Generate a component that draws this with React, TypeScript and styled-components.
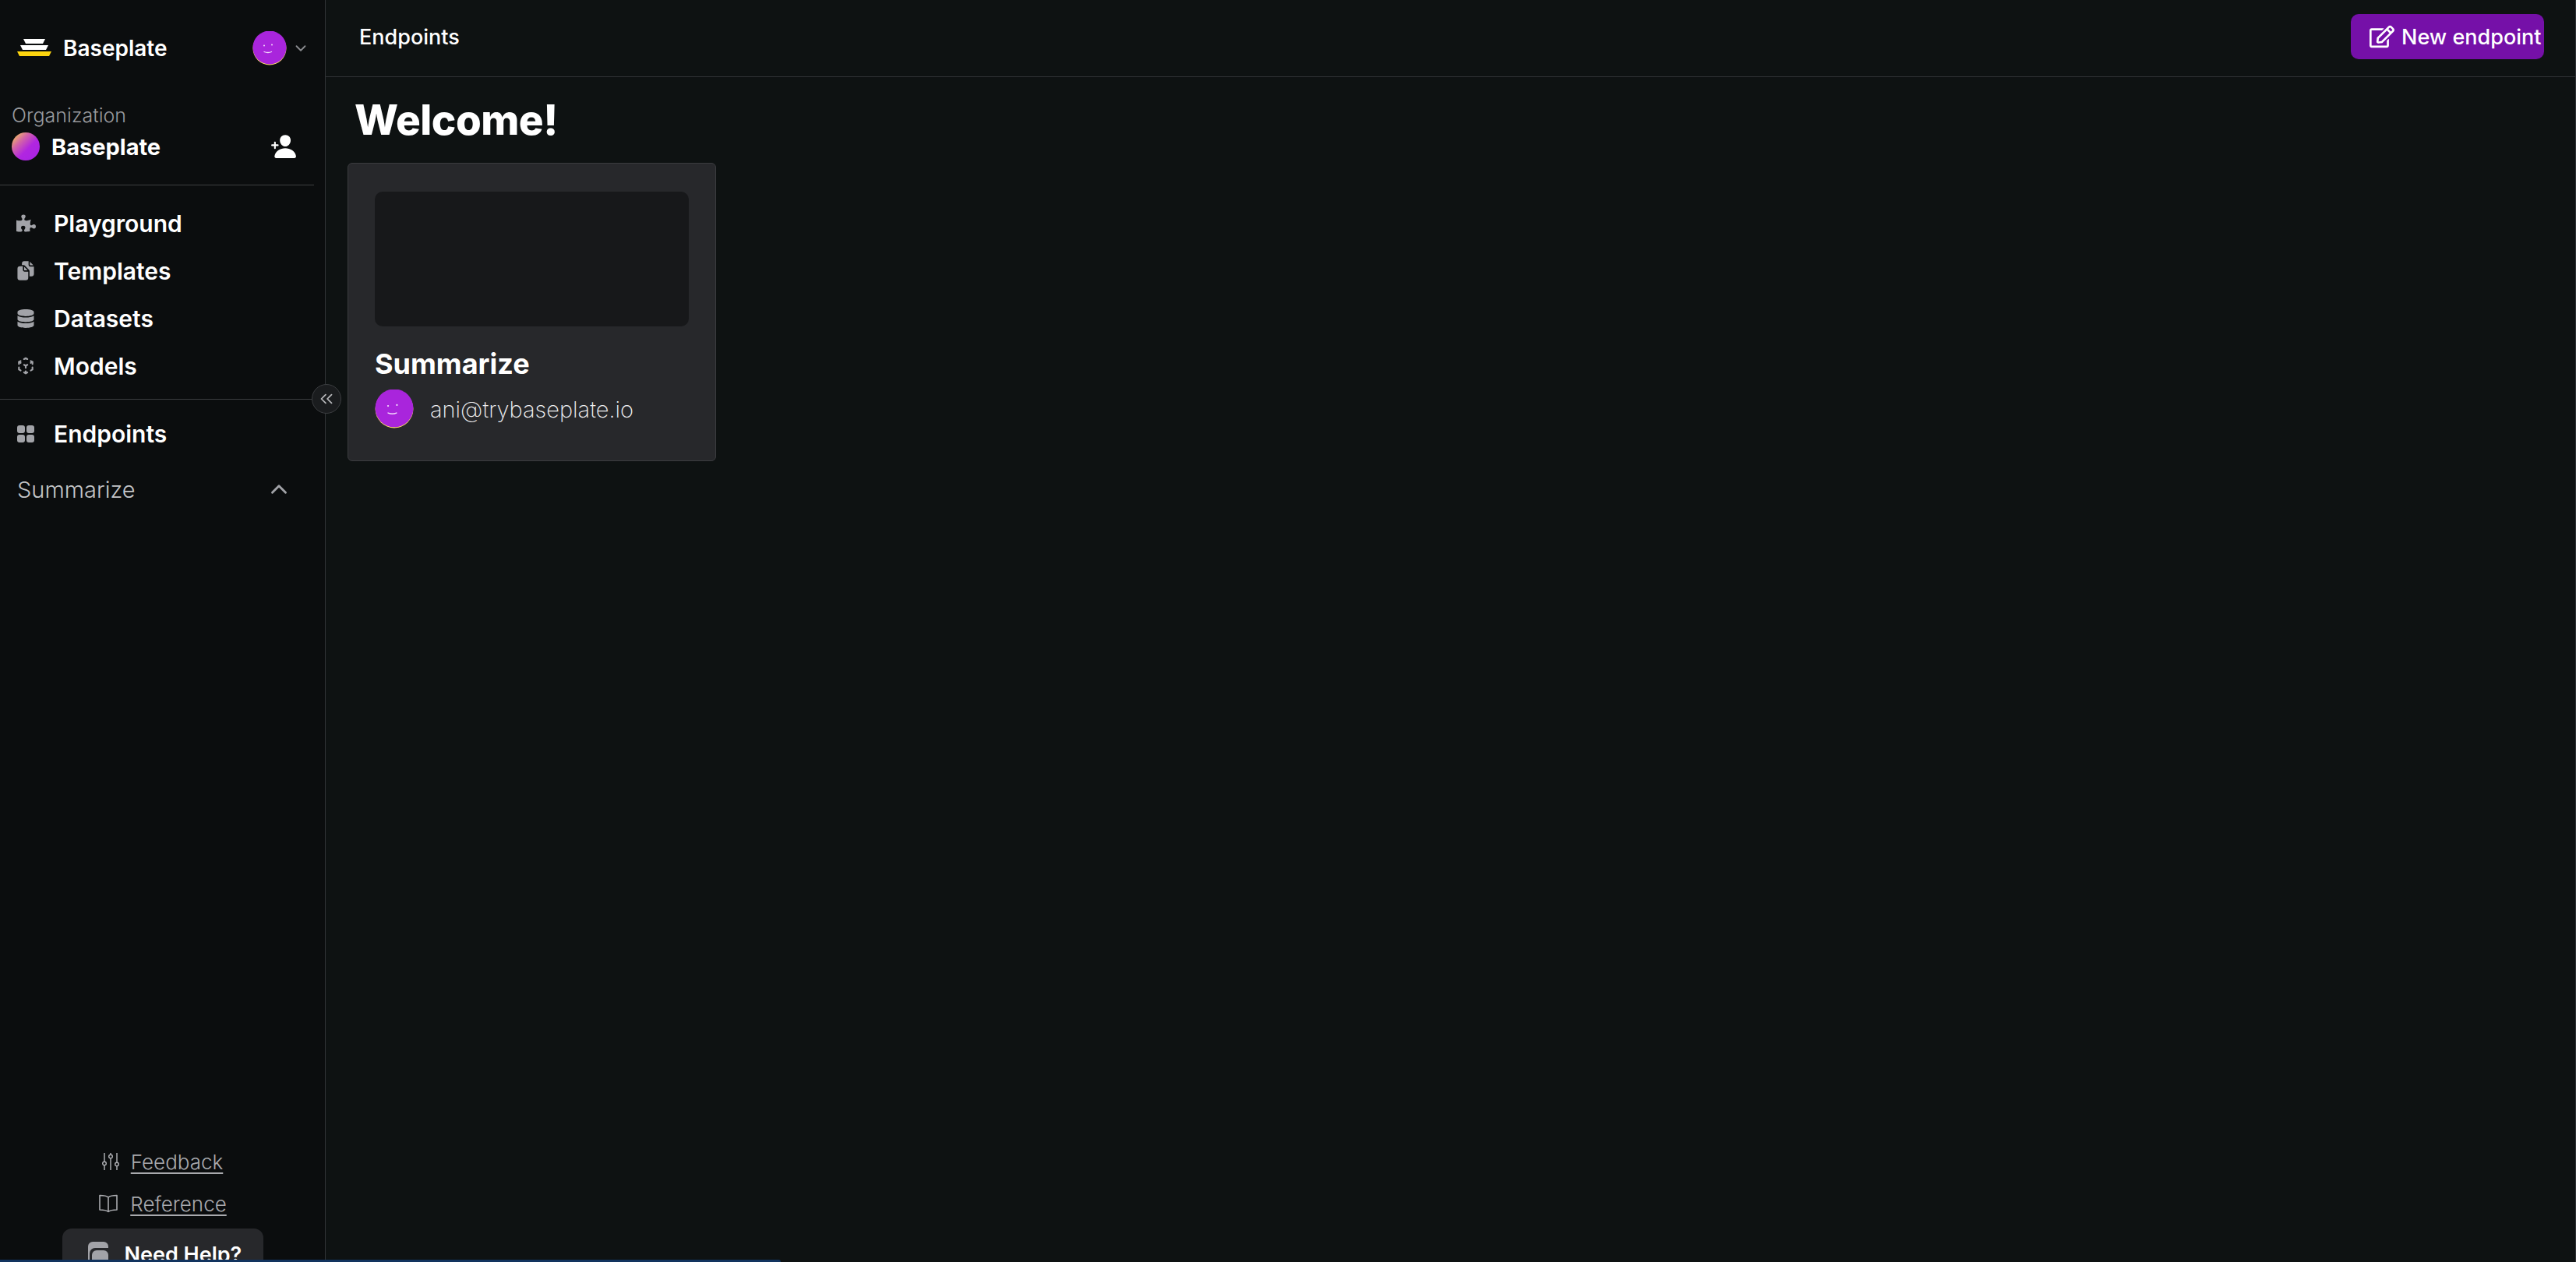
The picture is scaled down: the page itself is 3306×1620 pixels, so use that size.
import styled, { createGlobalStyle } from "styled-components";
import { ChevronDown, ChevronUp, ChevronsLeft } from "lucide-react";
import { FaPuzzlePiece, FaDatabase, FaRegEdit } from "react-icons/fa";
import { IoDocuments, IoPersonAdd } from "react-icons/io5";
import { TbCube3dSphere } from "react-icons/tb";

const GlobalStyle = createGlobalStyle`
  html, body {
    margin: 0;
    padding: 0;
    background: #0e1212;
    overflow: hidden;
  }
  * {
    box-sizing: border-box;
  }
`;

const Page = styled.div`
  position: relative;
  display: flex;
  width: 3306px;
  height: 1620px;
  overflow: hidden;
  font-family: Inter, "Liberation Sans", sans-serif;
  color: #fff;
`;

const Sidebar = styled.aside`
  position: relative;
  display: flex;
  flex-direction: column;
  flex: 0 0 418px;
  height: 1620px;
  background: #0b0d0e;
  border-right: 1px solid #303336;
`;

const BrandRow = styled.div`
  display: flex;
  align-items: center;
  height: 124px;
  padding: 0 20px 0 22px;
`;

const BrandName = styled.span`
  margin-left: 15px;
  font-size: 28px;
  font-weight: 600;
`;

const UserMenu = styled.div`
  display: flex;
  align-items: center;
  gap: 7px;
  margin-left: auto;
  color: #8b8c90;
`;

const Avatar = styled.div<{ $size: number }>`
  flex: none;
  width: ${(p) => p.$size}px;
  height: ${(p) => p.$size}px;
`;

const OrgBlock = styled.div`
  display: flex;
  flex-direction: column;
  height: 114px;
  padding: 9px 14px 0 15px;
  width: 403px;
  border-bottom: 1px solid #3c3e41;
`;

const OrgLabel = styled.div`
  font-size: 25px;
  font-weight: 300;
  line-height: 30px;
  color: #98999d;
`;

const OrgRow = styled.div`
  display: flex;
  align-items: center;
  margin-top: 7px;
`;

const OrgAvatar = styled.div`
  width: 36px;
  height: 36px;
  border-radius: 50%;
  background: linear-gradient(135deg, #f7cf52 4%, #d263a8 32%, #b126e0 58%, #a722e6 100%);
`;

const OrgName = styled.span`
  margin-left: 15px;
  font-size: 29px;
  font-weight: 700;
`;

const InviteIcon = styled(IoPersonAdd)`
  margin-left: auto;
  margin-right: 8px;
  width: 34px;
  height: 34px;
`;

const NavGroup = styled.nav`
  display: flex;
  flex-direction: column;
  padding: 18px 0 12px;
  border-bottom: 1px solid #3c3e41;
  width: 403px;
`;

const NavItem = styled.div<{ $tall?: boolean }>`
  display: flex;
  align-items: center;
  height: 61px;
  padding-left: 20px;
  font-size: 30px;
  font-weight: 600;
`;

const NavIcon = styled.span`
  display: flex;
  align-items: center;
  justify-content: center;
  width: 26px;
  height: 26px;
  margin-right: 23px;
  color: #a2a3a8;
`;

const EndpointGroup = styled.div`
  padding-top: 13px;
`;

const SubItem = styled.div`
  display: flex;
  align-items: center;
  justify-content: space-between;
  height: 60px;
  margin-top: 11px;
  padding: 0 42px 0 22px;
  font-size: 29px;
  font-weight: 300;
  color: #c4c5c8;
`;

const CollapseButton = styled.button`
  position: absolute;
  left: 400px;
  top: 493px;
  display: flex;
  align-items: center;
  justify-content: center;
  width: 38px;
  height: 38px;
  padding: 0;
  border: 1px solid #3c3e41;
  border-radius: 50%;
  background: #1a1c1e;
  color: #b9babd;
`;

const SidebarFooter = styled.div`
  display: flex;
  flex-direction: column;
  align-items: center;
  margin-top: auto;
  margin-bottom: -50px;
`;

const FooterLink = styled.a`
  display: flex;
  align-items: center;
  gap: 15px;
  height: 54px;
  font-size: 26px;
  font-weight: 300;
  color: #a9aaae;
  text-decoration: underline;
  text-underline-offset: 4px;
`;

const HelpCard = styled.div`
  display: flex;
  align-items: flex-start;
  gap: 21px;
  width: 258px;
  height: 93px;
  margin-top: 5px;
  padding: 17px 0 0 33px;
  border-radius: 12px;
  background: #27282b;
  font-size: 27px;
  font-weight: 600;
`;

const Main = styled.main`
  display: flex;
  flex-direction: column;
  flex: 1;
  background: #0e1212;
  border-right: 1px solid #303336;
`;

const TopBar = styled.header`
  display: flex;
  align-items: center;
  justify-content: space-between;
  height: 99px;
  padding: 0 40px 4px 43px;
  border-bottom: 1px solid #303336;
`;

const Crumb = styled.span`
  font-size: 27px;
  font-weight: 500;
`;

const NewButton = styled.button`
  display: flex;
  align-items: center;
  gap: 9px;
  width: 248px;
  height: 58px;
  padding: 0 0 0 24px;
  border: none;
  border-radius: 10px;
  background: #7510a8;
  color: #fff;
  font-family: inherit;
  font-size: 27px;
  font-weight: 500;
`;

const Content = styled.section`
  padding: 0 0 0 28px;
`;

const Heading = styled.h1`
  margin: 0;
  height: 110px;
  padding: 22px 0 0 9px;
  font-size: 53px;
  line-height: 66px;
  font-weight: 800;
  letter-spacing: -0.5px;
`;

const Card = styled.article`
  display: flex;
  flex-direction: column;
  width: 473px;
  height: 383px;
  padding: 36px 34px 0;
  border: 1px solid #3b3c3f;
  border-radius: 6px;
  background: #27282b;
`;

const Thumb = styled.div`
  height: 173px;
  border-radius: 10px;
  background: #17181a;
`;

const CardTitle = styled.h2`
  margin: 25px 0 0;
  font-size: 36px;
  line-height: 46px;
  font-weight: 700;
`;

const Owner = styled.div`
  display: flex;
  align-items: center;
  gap: 21px;
  margin-top: 10px;
  font-size: 29px;
  font-weight: 200;
  color: #f0f0f2;
`;

const LoadBar = styled.div`
  position: absolute;
  left: 0;
  bottom: 0;
  width: 1002px;
  height: 3px;
  border-radius: 0 3px 0 0;
  background: #12345f;
`;

function Logo() {
  return (
    <svg width="44" height="24" viewBox="0 0 44 24">
      <polygon points="8,0 36,0 33,6 11,6" fill="#fff" />
      <polygon points="4,8 40,8 37,14 7,14" fill="#fff" />
      <polygon points="0,16 44,16 41,22 3,22" fill="#fdd50f" />
    </svg>
  );
}

function SmileAvatar({ size }: { size: number }) {
  return (
    <Avatar $size={size}>
      <svg width={size} height={size} viewBox="0 0 44 44">
        <circle cx="22" cy="22" r="21.5" fill="#fbdc6a" />
        <circle cx="22" cy="21" r="21.5" fill="#a925dc" />
        <circle cx="15" cy="18.5" r="1" fill="#f4dcfc" />
        <circle cx="25" cy="17.5" r="1" fill="#f4dcfc" />
        <path d="M15 26.5 Q20 28.5 24.5 26.5" stroke="#f4dcfc" strokeWidth="1.3" fill="none" strokeLinecap="round" />
      </svg>
    </Avatar>
  );
}

function GridIcon() {
  return (
    <svg width="24" height="24" viewBox="0 0 24 24" fill="currentColor">
      <rect x="1" y="1" width="10" height="10" rx="3" />
      <rect x="13" y="1" width="10" height="10" rx="3" />
      <rect x="1" y="13" width="10" height="10" rx="3" />
      <rect x="13" y="13" width="10" height="10" rx="3" />
    </svg>
  );
}

function SlidersIcon() {
  return (
    <svg width="22" height="24" viewBox="0 0 22 24" fill="none" stroke="currentColor" strokeWidth="1.5">
      <path d="M3 1v11M3 17v6M11 1v2M11 8v15M19 1v12M19 18v5" />
      <circle cx="3" cy="14.5" r="2.3" />
      <circle cx="11" cy="5.5" r="2.3" />
      <circle cx="19" cy="15.5" r="2.3" />
    </svg>
  );
}

function BookIcon() {
  return (
    <svg width="26" height="24" viewBox="0 0 26 24" fill="none" stroke="currentColor" strokeWidth="1.6" strokeLinejoin="round">
      <path d="M13 4C11 2 7 1.500 2 1.500V20c5 0 8.500 .5 11 2.500 2.500-2 6-2.500 11-2.500V1.500C19 1.500 15 2 13 4Zm0 0v18.500" />
    </svg>
  );
}

function HelpIcon() {
  return (
    <svg width="26" height="30" viewBox="0 0 26 30" fill="#a2a3a8">
      <path d="M6 0h14a6 6 0 0 1 6 6v2H9a7 7 0 0 0-7 7v11a4 4 0 0 1-2-4V6a6 6 0 0 1 6-6Z" />
      <rect x="5" y="11" width="21" height="19" rx="6" />
    </svg>
  );
}

export default function App() {
  return (
    <>
      <GlobalStyle />
      <Page>
        <Sidebar>
          <BrandRow>
            <Logo />
            <BrandName>Baseplate</BrandName>
            <UserMenu>
              <SmileAvatar size={44} />
              <ChevronDown size={22} strokeWidth={2} />
            </UserMenu>
          </BrandRow>
          <OrgBlock>
            <OrgLabel>Organization</OrgLabel>
            <OrgRow>
              <OrgAvatar />
              <OrgName>Baseplate</OrgName>
              <InviteIcon />
            </OrgRow>
          </OrgBlock>
          <NavGroup>
            <NavItem>
              <NavIcon><FaPuzzlePiece size={25} /></NavIcon>
              Playground
            </NavItem>
            <NavItem>
              <NavIcon><IoDocuments size={27} /></NavIcon>
              Templates
            </NavItem>
            <NavItem>
              <NavIcon><FaDatabase size={24} /></NavIcon>
              Datasets
            </NavItem>
            <NavItem>
              <NavIcon><TbCube3dSphere size={27} /></NavIcon>
              Models
            </NavItem>
          </NavGroup>
          <EndpointGroup>
            <NavItem>
              <NavIcon><GridIcon /></NavIcon>
              Endpoints
            </NavItem>
            <SubItem>
              Summarize
              <ChevronUp size={34} strokeWidth={2} color="#a2a3a8" />
            </SubItem>
          </EndpointGroup>
          <CollapseButton>
            <ChevronsLeft size={26} strokeWidth={1.6} />
          </CollapseButton>
          <SidebarFooter>
            <FooterLink>
              <SlidersIcon />
              Feedback
            </FooterLink>
            <FooterLink>
              <BookIcon />
              Reference
            </FooterLink>
            <HelpCard>
              <HelpIcon />
              Need Help?
            </HelpCard>
          </SidebarFooter>
        </Sidebar>
        <Main>
          <TopBar>
            <Crumb>Endpoints</Crumb>
            <NewButton>
              <FaRegEdit size={32} />
              New endpoint
            </NewButton>
          </TopBar>
          <Content>
            <Heading>Welcome!</Heading>
            <Card>
              <Thumb />
              <CardTitle>Summarize</CardTitle>
              <Owner>
                <SmileAvatar size={50} />
                ani@trybaseplate.io
              </Owner>
            </Card>
          </Content>
        </Main>
        <LoadBar />
      </Page>
    </>
  );
}
